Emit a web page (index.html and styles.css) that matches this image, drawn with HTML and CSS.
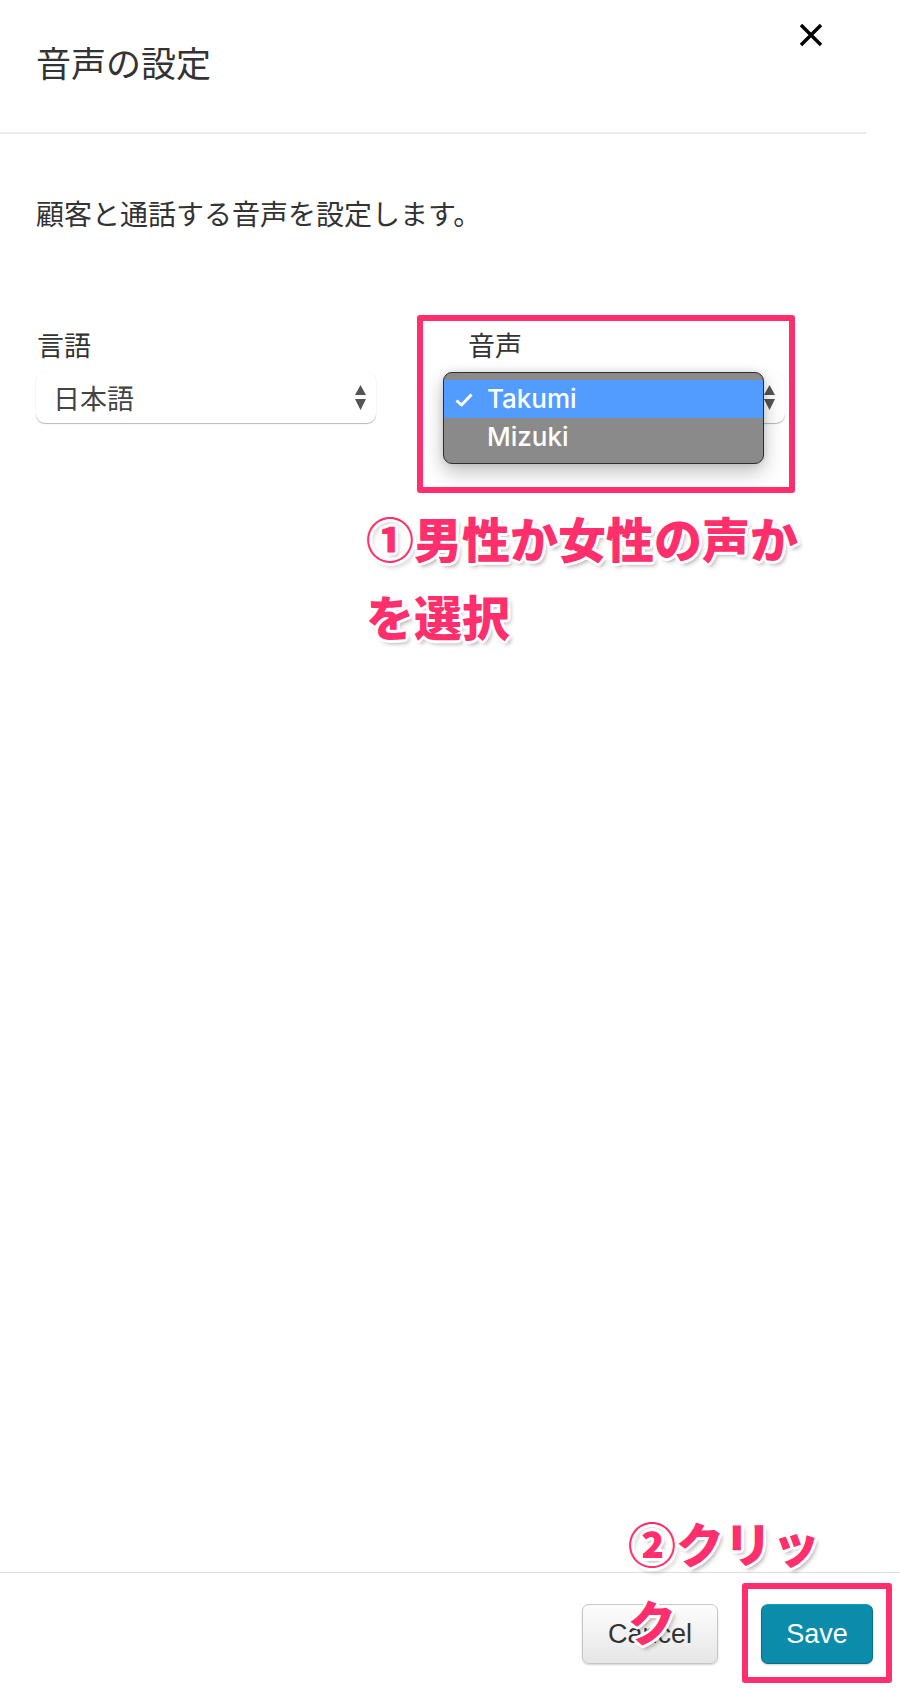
FILE: index.html
```html
<!DOCTYPE html>
<html lang="ja">
<head>
    <meta charset="UTF-8">
    <meta name="viewport" content="width=device-width, initial-scale=1.0">
    <title>音声の設定</title>
    <link rel="stylesheet" href="styles.css">
</head>
<body>
    <div class="page">
        <div class="modal-header">
            <h1 class="modal-title">音声の設定</h1>
            <button class="close-btn" aria-label="閉じる">
                <svg width="24" height="24" viewBox="0 0 24 24">
                    <path d="M2 2 L22 22 M22 2 L2 22" stroke="#000" stroke-width="3.4" fill="none"/>
                </svg>
            </button>
        </div>

        <div class="modal-body">
            <p class="description">顧客と通話する音声を設定します。</p>

            <div class="fields">
                <div class="field">
                    <label class="field-label">言語</label>
                    <div class="select-box">
                        <span class="select-value">日本語</span>
                        <svg class="select-arrows" width="11" height="26" viewBox="0 0 11 26">
                            <path d="M5.5 0 L11 10 L0 10 Z M0 14 L11 14 L5.5 25 Z" fill="#555"/>
                        </svg>
                    </div>
                </div>
                <div class="field">
                    <label class="field-label">音声</label>
                    <div class="select-box voice-select">
                        <span class="select-value">Takumi</span>
                        <svg class="select-arrows" width="11" height="26" viewBox="0 0 11 26">
                            <path d="M5.5 0 L11 10 L0 10 Z M0 14 L11 14 L5.5 25 Z" fill="#555"/>
                        </svg>
                        <!-- open dropdown -->
                        <ul class="dropdown">
                            <li class="option selected">
                                <svg class="check" width="18" height="14" viewBox="0 0 18 14">
                                    <path d="M1.5 7.5 L6.5 12 L16.5 1.5" stroke="#fff" stroke-width="3" fill="none" stroke-linejoin="round"/>
                                </svg>Takumi
                            </li>
                            <li class="option">Mizuki</li>
                        </ul>
                    </div>
                </div>
            </div>
        </div>

        <div class="modal-footer">
            <button class="btn btn-cancel">Cancel</button>
            <button class="btn btn-save">Save</button>
        </div>

        <!-- annotations -->
        <div class="mark mark-voice"></div>
        <div class="mark mark-save"></div>
        <p class="note note-voice">①男性か女性の声かを選択</p>
        <p class="note note-save">②クリック</p>
    </div>
</body>
</html>
```

FILE: styles.css
```css
* {
    box-sizing: border-box;
}

body {
    margin: 0;
    background: #fff;
    font-family: "Noto Sans CJK JP", "Liberation Sans", sans-serif;
    color: #333;
}

.page {
    position: relative;
    width: 900px;
    height: 1688px;
    display: flex;
    flex-direction: column;
    overflow: hidden;
}

.modal-header {
    width: 866px;
    height: 134px;
    border-bottom: 2px solid #ebebeb;
    padding: 0 36px;
    display: flex;
    justify-content: space-between;
    align-items: flex-start;
}

.modal-title {
    margin: 39px 0 0;
    font-size: 35px;
    font-weight: normal;
    line-height: 46px;
    color: #333;
}

.close-btn {
    margin: 23px 7px 0 0;
    padding: 0;
    border: 0;
    background: none;
    width: 24px;
    height: 24px;
    cursor: pointer;
}

.close-btn svg {
    display: block;
}

.modal-body {
    flex: 1;
    padding: 59px 36px 0;
}

.description {
    margin: 0;
    font-size: 28px;
    line-height: 40px;
}

.fields {
    display: grid;
    grid-template-columns: 340px 318px;
    column-gap: 91px;
    margin-top: 92px;
}

.field-label {
    display: block;
    font-size: 27px;
    line-height: 40px;
    padding-left: 1px;
}

.select-box {
    position: relative;
    margin-top: 7px;
    height: 51px;
    background: #fff;
    border-radius: 9px;
    box-shadow: 0 1px 1px rgba(0, 0, 0, 0.28), 0 0 1px rgba(0, 0, 0, 0.08);
    display: flex;
    align-items: center;
    justify-content: space-between;
    padding: 0 10px 0 17px;
}

.select-value {
    font-size: 27px;
    color: #444;
    line-height: 1;
}

.select-arrows {
    display: block;
    margin-top: 1px;
}

.voice-select .select-value {
    font-family: "Liberation Sans", sans-serif;
}

.dropdown {
    position: absolute;
    left: -24px;
    top: 0;
    width: 321px;
    margin: 0;
    padding: 7px 0;
    list-style: none;
    background: #8a8a8a;
    border: 1px solid #2e2e2e;
    border-radius: 9px;
    box-shadow: 0 8px 20px rgba(0, 0, 0, 0.25), 0 0 6px rgba(0, 0, 0, 0.12);
    overflow: hidden;
}

.option {
    position: relative;
    height: 38px;
    padding-left: 43px;
    font-family: Inter, "Liberation Sans", sans-serif;
    font-weight: 500;
    font-size: 26px;
    line-height: 38px;
    color: #fff;
}

.option.selected {
    background: #539cff;
}

.check {
    position: absolute;
    left: 11px;
    top: 13px;
}

.modal-footer {
    height: 116px;
    border-top: 1px solid #dcdcdc;
    display: flex;
    justify-content: flex-end;
    align-items: flex-start;
    gap: 43px;
    padding: 31px 27px 0 0;
}

.btn {
    height: 60px;
    border-radius: 7px;
    font-family: "Liberation Sans", Arial, sans-serif;
    font-size: 27px;
    cursor: pointer;
}

.btn-cancel {
    width: 136px;
    color: #333;
    background: linear-gradient(#fdfdfd, #e6e6e6);
    border: 1px solid #c6c6c6;
    box-shadow: 0 1px 2px rgba(0, 0, 0, 0.18);
}

.btn-save {
    width: 112px;
    color: #fff;
    background: #0b8cab;
    border: 1px solid #06708c;
    border-top-color: #1a9ab8;
    box-shadow: 0 1px 2px rgba(0, 0, 0, 0.18);
}

/* annotation overlays */
.mark {
    position: absolute;
    border: 6px solid #ff2f6d;
    border-radius: 3px;
}

.mark-voice {
    left: 417px;
    top: 315px;
    width: 378px;
    height: 178px;
}

.mark-save {
    left: 742px;
    top: 1583px;
    width: 150px;
    height: 100px;
}

.note {
    position: absolute;
    margin: 0;
    font-size: 48px;
    font-weight: 900;
    line-height: 78px;
    color: #ff2f6d;
    text-shadow:
        3px 0 0 #fff, -3px 0 0 #fff, 0 3px 0 #fff, 0 -3px 0 #fff,
        2px 2px 0 #fff, -2px 2px 0 #fff, 2px -2px 0 #fff, -2px -2px 0 #fff,
        3px 4px 4px rgba(0, 0, 0, 0.3);
}

.note-voice {
    left: 366px;
    top: 498px;
    width: 450px;
}

.note-save {
    left: 628px;
    top: 1503px;
    width: 200px;
}
```
